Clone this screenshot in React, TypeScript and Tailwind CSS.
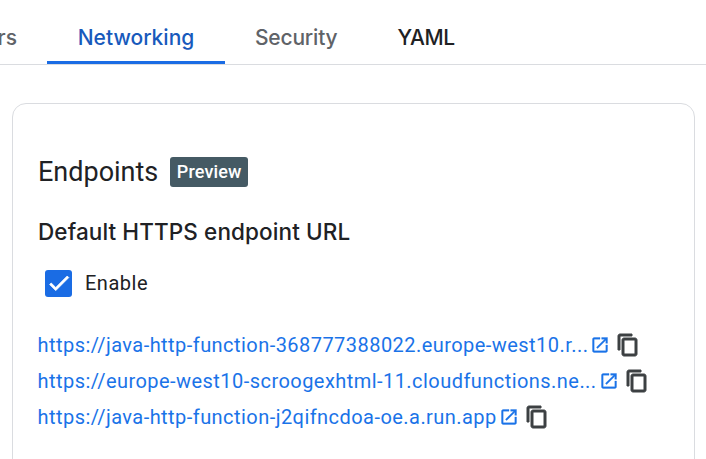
import React from 'react';

const tabClass = "flex h-[64px] items-center px-[30px] pt-[11px] text-[21px] font-medium";

function OpenIcon() {
  return (
    <svg viewBox="0 0 24 24" className="ml-[2px] h-[20px] w-[20px] shrink-0 fill-[#1a73e8] stroke-[#1a73e8] stroke-[0.4]">
      <path d="M19 19H5V5h7V3H5c-1.11 0-2 .9-2 2v14c0 1.1.89 2 2 2h14c1.1 0 2-.9 2-2v-7h-2v7zM14 3v2h3.59l-9.83 9.83 1.41 1.41L19 6.41V10h2V3h-7z" />
    </svg>
  );
}

function CopyIcon() {
  return (
    <svg viewBox="0 0 24 24" className="ml-[6px] h-[24px] w-[24px] shrink-0 fill-[#3c4043] stroke-[#3c4043] stroke-[1]">
      <path d="M16 1H4c-1.1 0-2 .9-2 2v14h2V3h12V1zm3 4H8c-1.1 0-2 .9-2 2v14c0 1.1.9 2 2 2h11c1.1 0 2-.9 2-2V7c0-1.1-.9-2-2-2zm0 16H8V7h11v14z" />
    </svg>
  );
}

const links = [
  "https://java-http-function-368777388022.europe-west10.r...",
  "https://europe-west10-scroogexhtml-11.cloudfunctions.ne...",
  "https://java-http-function-j2qifncdoa-oe.a.run.app",
];

export default function App() {
  return (
    <div className="h-[459px] w-[706px] overflow-hidden bg-white font-['Roboto',sans-serif] text-[#202124]">
      <div className="flex h-[65px] border-b border-[#dadce0] font-['Inter',sans-serif]">
        <div className="-ml-[80px] flex h-[64px] w-[127px] items-center justify-end pr-[30px] pt-[11px] text-[21px] font-medium text-[#5f6368]">Triggers</div>
        <div className="flex h-[64px] w-[178px] items-center justify-center border-b-[3px] border-[#1a6ce4] pt-[15px] text-[21px] font-medium text-[#185abc]">Networking</div>
        <div className={tabClass + " text-[#5f6368] tracking-[-0.2px]"}>Security</div>
        <div className={tabClass + " text-[#202124] tracking-[-0.4px]"}>YAML</div>
      </div>
      <div className="ml-[12px] mt-[38px] h-[400px] w-[683px] rounded-[14px] border border-[#dadce0] pl-[25px] pt-[52px]">
        <div className="flex items-center">
          <h2 className="text-[27px] leading-[32px]">Endpoints</h2>
          <span className="ml-[12px] rounded-[3px] bg-[#455a64] px-[6.5px] text-[18px] font-medium leading-[30px] tracking-[0.15px] text-white">Preview</span>
        </div>
        <h3 className="mt-[28px] font-['Inter',sans-serif] text-[22.5px] font-medium leading-[32px] tracking-[0.1px]">Default HTTPS endpoint URL</h3>
        <label className="ml-[7px] mt-[20px] flex items-center">
          <span className="flex h-[27px] w-[27px] items-center justify-center rounded-[3px] bg-[#1a6ce4]">
            <svg viewBox="0 0 24 24" className="h-[26px] w-[26px] fill-white stroke-white stroke-[0.8]">
              <path d="M9 16.17L4.83 12l-1.41 1.41L9 19 21 7l-1.41-1.41z" />
            </svg>
          </span>
          <span className="ml-[13px] text-[20px] tracking-[0.5px]">Enable</span>
        </label>
        <div className="mt-[29px] flex flex-col">
          {links.map((l) => (
            <div key={l} className="flex h-[36px] items-center">
              <a className="-ml-[0.5px] text-[20px] tracking-[0.45px] text-[#1a73e8]">{l}</a>
              <OpenIcon />
              <CopyIcon />
            </div>
          ))}
        </div>
      </div>
    </div>
  );
}
